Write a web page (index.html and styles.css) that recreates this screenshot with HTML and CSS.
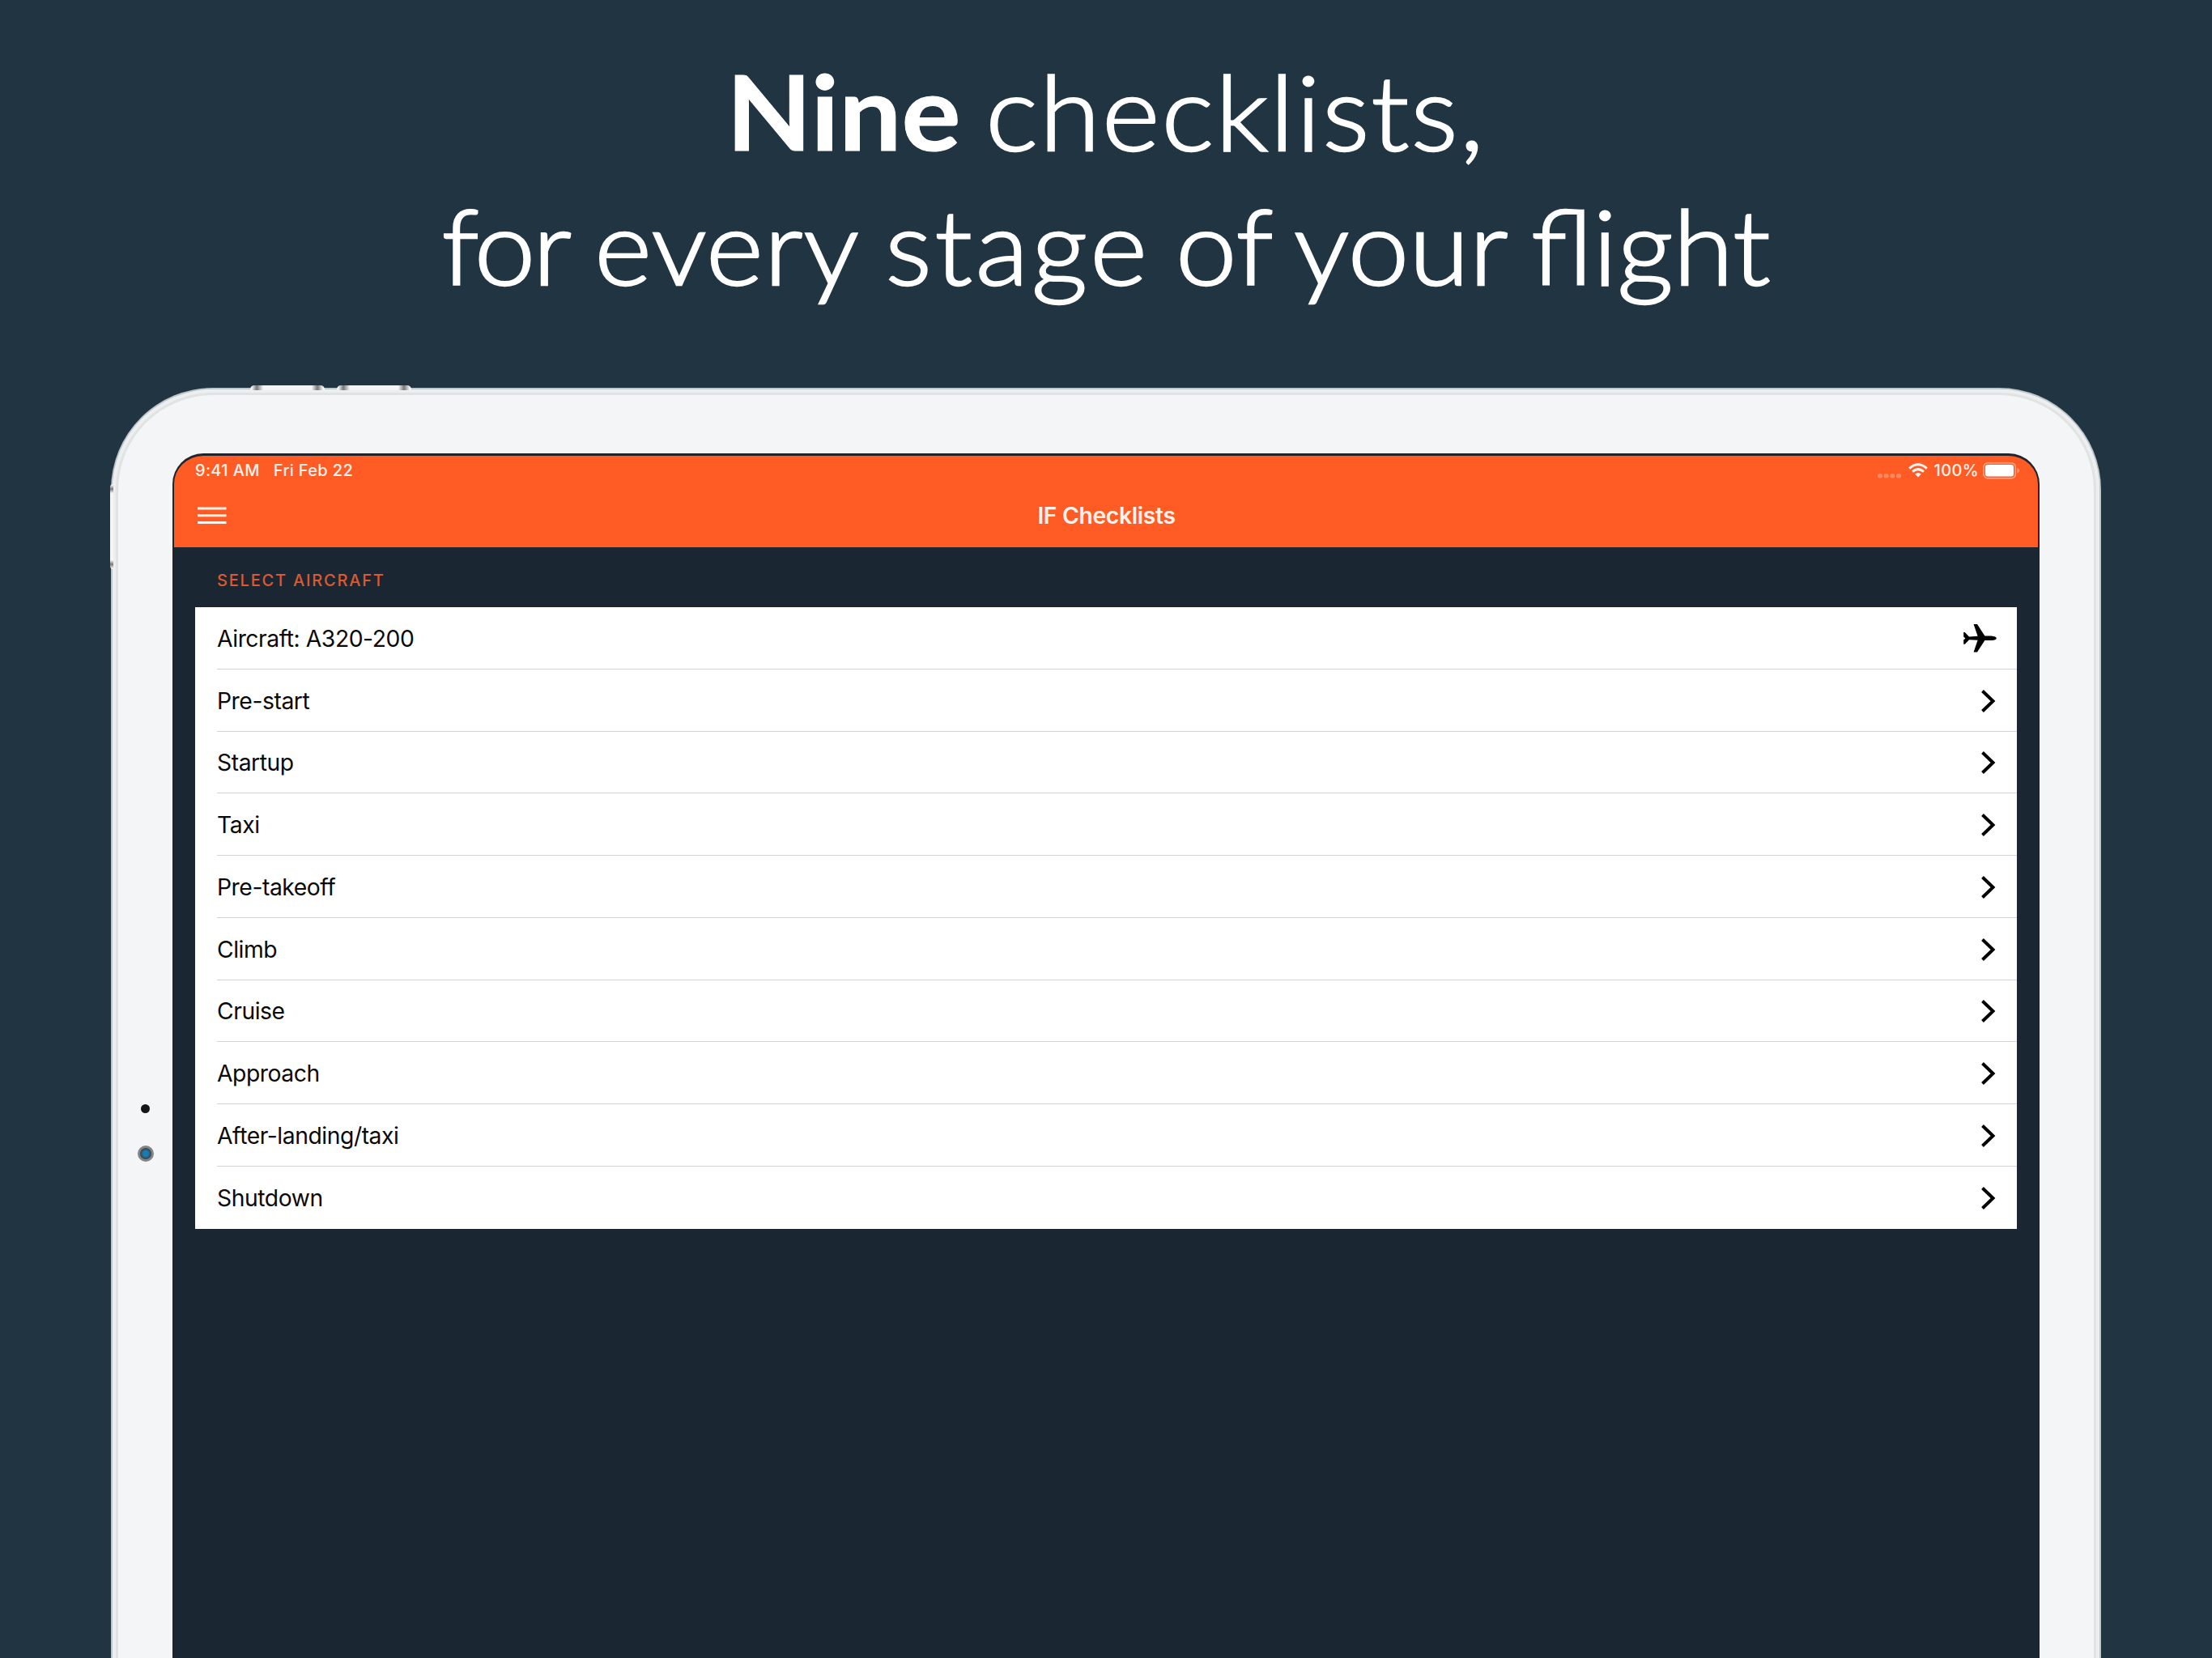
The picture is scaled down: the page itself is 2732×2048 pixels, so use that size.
FILE: index.html
```html
<!DOCTYPE html>
<html lang="en">
<head>
<meta charset="utf-8">
<title>IF Checklists</title>
<link rel="stylesheet" href="styles.css">
</head>
<body>
<header class="hero">
  <p class="line line-one"><strong class="strong">Nine</strong> <span class="looser">checklists,</span></p>
  <p class="line line-two"><span class="tight">for</span> <span class="loose">every</span> <span class="loosest">stage</span> of your flight</p>
</header>
<main class="device">
  <i class="button button-up"></i>
  <i class="button button-down"></i>
  <i class="button button-power"></i>
  <i class="sensor"></i>
  <i class="camera"></i>
  <div class="screen">
    <div class="bar">
      <div class="status">
        <span class="time">9:41 AM</span>
        <span class="date">Fri Feb 22</span>
        <span class="spacer"></span>
        <svg class="cell" width="30" height="6" viewBox="0 0 30 6"><g fill="#fff" opacity=".28"><rect x="0" y="0" width="6" height="5.5" rx="2"/><rect x="7.6" y="0" width="6" height="5.5" rx="2"/><rect x="15.3" y="0" width="6" height="5.5" rx="2"/><rect x="23" y="0" width="6" height="5.5" rx="2"/></g></svg>
        <svg class="wifi" width="24" height="18" viewBox="0 0 24 18"><g fill="none" stroke="#fff" stroke-opacity=".95" stroke-width="3"><path d="M1.2 6.6Q12 -3 22.8 6.6"/><path d="M5 10.6Q12 4.6 19 10.6"/></g><path d="M8.2 13.6Q12 10.6 15.8 13.6L12 17.6Z" fill="#fff" fill-opacity=".95"/></svg>
        <span class="percent">100%</span>
        <svg class="battery" width="46" height="21" viewBox="0 0 46 21"><rect x=".9" y=".9" width="39.4" height="18.8" rx="5" fill="none" stroke="#fff" stroke-opacity=".42" stroke-width="1.6"/><rect x="3" y="3" width="35" height="14.5" rx="3" fill="#fff"/><path d="M42.3 7Q45 8 45 10.3T42.3 13.6Z" fill="#fff" fill-opacity=".42"/></svg>
      </div>
      <div class="nav">
        <svg class="menu" width="36" height="22" viewBox="0 0 36 22"><path d="M0 2H35.5M0 10.8H35.5M0 19.6H35.5" stroke="#fff" stroke-opacity=".92" stroke-width="3"/></svg>
        <h1 class="title">IF Checklists</h1>
      </div>
    </div>
    <h2 class="section">SELECT AIRCRAFT</h2>
    <ul class="list">
      <li class="row"><span class="label">Aircraft: A320-200</span><svg class="plane" width="41" height="35" viewBox="0 0 41 35"><path d="M12.6 0H17L26.4 14.6H34.5Q40.6 15.2 40.8 17.4Q40.6 19.6 34.5 20H26.4L17 34.6H12.6L17.6 19.8L7 19.2L1.8 24.8H.2V19.4L2.4 17.4L.2 15.4V10H1.8L7 15.4L17.6 14.8Z"/></svg></li>
      <li class="row"><span class="label">Pre-start</span><svg class="chevron" viewBox="0 0 20 30"><path d="M2.5 2.5L15.5 15L2.5 27.5"/></svg></li>
      <li class="row"><span class="label">Startup</span><svg class="chevron" viewBox="0 0 20 30"><path d="M2.5 2.5L15.5 15L2.5 27.5"/></svg></li>
      <li class="row"><span class="label">Taxi</span><svg class="chevron" viewBox="0 0 20 30"><path d="M2.5 2.5L15.5 15L2.5 27.5"/></svg></li>
      <li class="row"><span class="label">Pre-takeoff</span><svg class="chevron" viewBox="0 0 20 30"><path d="M2.5 2.5L15.5 15L2.5 27.5"/></svg></li>
      <li class="row"><span class="label">Climb</span><svg class="chevron" viewBox="0 0 20 30"><path d="M2.5 2.5L15.5 15L2.5 27.5"/></svg></li>
      <li class="row"><span class="label">Cruise</span><svg class="chevron" viewBox="0 0 20 30"><path d="M2.5 2.5L15.5 15L2.5 27.5"/></svg></li>
      <li class="row"><span class="label">Approach</span><svg class="chevron" viewBox="0 0 20 30"><path d="M2.5 2.5L15.5 15L2.5 27.5"/></svg></li>
      <li class="row"><span class="label">After-landing/taxi</span><svg class="chevron" viewBox="0 0 20 30"><path d="M2.5 2.5L15.5 15L2.5 27.5"/></svg></li>
      <li class="row"><span class="label">Shutdown</span><svg class="chevron" viewBox="0 0 20 30"><path d="M2.5 2.5L15.5 15L2.5 27.5"/></svg></li>
    </ul>
  </div>
</main>
</body>
</html>
```
FILE: styles.css
```css
* { box-sizing: border-box; margin: 0; padding: 0; }
body {
  width: 2732px;
  height: 2048px;
  overflow: hidden;
  background: #213441;
  font-family: Inter, "Liberation Sans", sans-serif;
  display: flex;
  flex-direction: column;
}
.hero {
  height: 479px;
  padding-top: 54px;
  flex: none;
  color: #fff;
  font-family: Lato, sans-serif;
  font-weight: 300;
  font-size: 128px;
  text-align: center;
  -webkit-text-stroke: 2.4px #fff;
}
.line { height: 166px; line-height: 166px; white-space: nowrap; }
.line-one { transform: scaleX(1.068); word-spacing: -6px; }
.line-two { transform: scaleX(1.058); word-spacing: -5px; }
.strong { font-weight: 700; -webkit-text-stroke-width: 1px; }
.tight { letter-spacing: -3px; }
.loose { letter-spacing: 1px; }
.looser { letter-spacing: 2px; }
.loosest { letter-spacing: 3.6px; }
.device {
  position: relative;
  flex: none;
  width: 2458px;
  height: 1569px;
  margin-left: 137px;
  padding: 79px 74px 0;
  border: 2px solid #bfc6ca;
  border-bottom: 0;
  border-radius: 126px 126px 0 0;
  background: #f3f5f7;
}
/* Metal rim: a grey inner line under a lighter outer band */
.device::before,
.device::after {
  content: "";
  position: absolute;
  inset: 0;
  border-radius: 124px 124px 0 0;
  border: solid #dfe3e2;
  border-width: 7px 7px 0;
}
.device::after { border: solid #eceeef; border-width: 4px 4px 0; }
.button { position: absolute; z-index: 1; }
.button-up, .button-down {
  top: -5px;
  width: 92px;
  height: 6px;
  border-radius: 5px 5px 0 0;
  background: linear-gradient(90deg, #f3f5f6 2px, #777 8px, #f3f5f6 16px, #f3f5f6 76px, #777 83px, #f3f5f6 90px);
}
.button-up { left: 170px; }
.button-down { left: 277px; }
.button-power {
  left: -3px;
  top: 117px;
  width: 4px;
  height: 105px;
  border-radius: 4px 0 0 4px;
  background: linear-gradient(#f3f5f6 1px, #777 6px, #f3f5f6 11px, #f3f5f6 94px, #777 99px, #f3f5f6 104px);
}
.sensor {
  position: absolute;
  left: 35px;
  top: 883px;
  width: 11px;
  height: 11px;
  border-radius: 50%;
  background: #151515;
}
.camera {
  position: absolute;
  left: 31px;
  top: 934px;
  width: 20px;
  height: 20px;
  border-radius: 50%;
  border: 3.5px solid #858585;
  background: radial-gradient(#1b7cb0 0 30%, #21668e 45%, #394750 65%);
}
.screen {
  height: 1488px;
  border: solid #20242a;
  border-width: 3px 2px 0;
  border-radius: 38px 38px 0 0;
  overflow: hidden;
  background: #1a2733;
}
.bar { height: 112.5px; background: #ff5b24; color: #fff; }
.status {
  height: 36px;
  padding: 0 22px 0 26px;
  display: flex;
  align-items: center;
  font-size: 20px;
  font-weight: 500;
  letter-spacing: .35px;
  color: #fff1eb;
}
.date { margin-left: 17px; }
.spacer { flex: 1; }
.cell { margin: 13px 8px 0 0; }
.wifi { margin-right: 8px; }
.percent { margin-right: 5px; }
.nav {
  height: 76px;
  padding: 0 28px 0 29px;
  display: grid;
  grid-template-columns: 1fr auto 1fr;
  align-items: center;
}
.title { font-size: 28.3px; font-weight: 600; letter-spacing: -.35px; color: #fff1eb; }
.section {
  height: 74.5px;
  padding-left: 53px;
  line-height: 82px;
  font-size: 20px;
  font-weight: 500;
  letter-spacing: 1.8px;
  color: #de5930;
}
.list { margin: 0 26px; padding-left: 27px; background: #fff; list-style: none; height: 768px; }
.row {
  height: 76.75px;
  padding: 2px 25px 0 0;
  display: flex;
  align-items: center;
  justify-content: space-between;
  border-bottom: 1px solid #d2d2d4;
}
.row:last-child { border-bottom: 0; }
.label { font-size: 28.3px; letter-spacing: -.45px; color: #0a0a0a; }
.chevron { width: 20px; height: 30px; fill: none; stroke: #000; stroke-width: 4; }
```
